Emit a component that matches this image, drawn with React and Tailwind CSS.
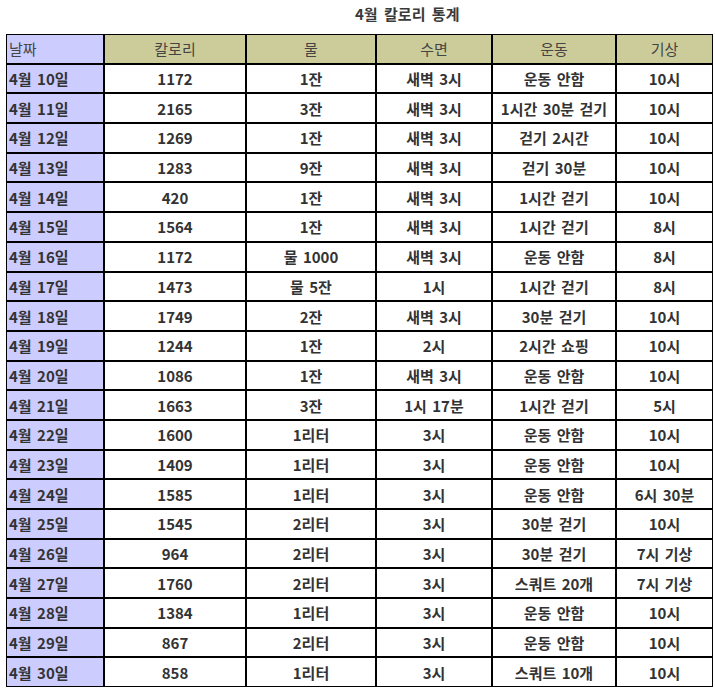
import { Fragment } from "react";

const rows = [
  ["4월 10일", "1172", "1잔", "새벽 3시", "운동 안함", "10시"],
  ["4월 11일", "2165", "3잔", "새벽 3시", "1시간 30분 걷기", "10시"],
  ["4월 12일", "1269", "1잔", "새벽 3시", "걷기 2시간", "10시"],
  ["4월 13일", "1283", "9잔", "새벽 3시", "걷기 30분", "10시"],
  ["4월 14일", "420", "1잔", "새벽 3시", "1시간 걷기", "10시"],
  ["4월 15일", "1564", "1잔", "새벽 3시", "1시간 걷기", "8시"],
  ["4월 16일", "1172", "물 1000", "새벽 3시", "운동 안함", "8시"],
  ["4월 17일", "1473", "물 5잔", "1시", "1시간 걷기", "8시"],
  ["4월 18일", "1749", "2잔", "새벽 3시", "30분 걷기", "10시"],
  ["4월 19일", "1244", "1잔", "2시", "2시간 쇼핑", "10시"],
  ["4월 20일", "1086", "1잔", "새벽 3시", "운동 안함", "10시"],
  ["4월 21일", "1663", "3잔", "1시 17분", "1시간 걷기", "5시"],
  ["4월 22일", "1600", "1리터", "3시", "운동 안함", "10시"],
  ["4월 23일", "1409", "1리터", "3시", "운동 안함", "10시"],
  ["4월 24일", "1585", "1리터", "3시", "운동 안함", "6시 30분"],
  ["4월 25일", "1545", "2리터", "3시", "30분 걷기", "10시"],
  ["4월 26일", "964", "2리터", "3시", "30분 걷기", "7시 기상"],
  ["4월 27일", "1760", "2리터", "3시", "스쿼트 20개", "7시 기상"],
  ["4월 28일", "1384", "1리터", "3시", "운동 안함", "10시"],
  ["4월 29일", "867", "2리터", "3시", "운동 안함", "10시"],
  ["4월 30일", "858", "1리터", "3시", "스쿼트 10개", "10시"],
];

const headers = ["칼로리", "물", "수면", "운동", "기상"];

export default function App() {
  return (
    <div
      className="w-[715px] h-[694px] bg-white text-[#333333] text-[15px] leading-none [word-spacing:2px]"
      style={{ fontFamily: '"Noto Sans CJK KR", "Noto Sans", sans-serif' }}
    >
      <div className="h-[34px] pl-[355px] pt-[6px] text-[15px] font-bold text-[#3a3a3a] [word-spacing:3px]">
        4월 칼로리 통계
      </div>
      <div className="ml-[6px] w-[707px] border border-black bg-black grid grid-cols-[96px_140px_128px_114px_122px_95px] auto-rows-[27.7px] gap-[2px]">
        <div className="bg-[#ccccff] flex items-center pl-[2px] text-[#444]">날짜</div>
        {headers.map((h) => (
          <div key={h} className="bg-[#cccc9a] flex items-center justify-center text-[#444]">
            {h}
          </div>
        ))}
        {rows.map((r) => (
          <Fragment key={r[0]}>
            <div className="bg-[#ccccff] flex items-center pl-[2px] font-bold">{r[0]}</div>
            {r.slice(1).map((c, i) => (
              <div key={i} className="bg-white flex items-center justify-center font-bold">
                {c}
              </div>
            ))}
          </Fragment>
        ))}
      </div>
    </div>
  );
}
